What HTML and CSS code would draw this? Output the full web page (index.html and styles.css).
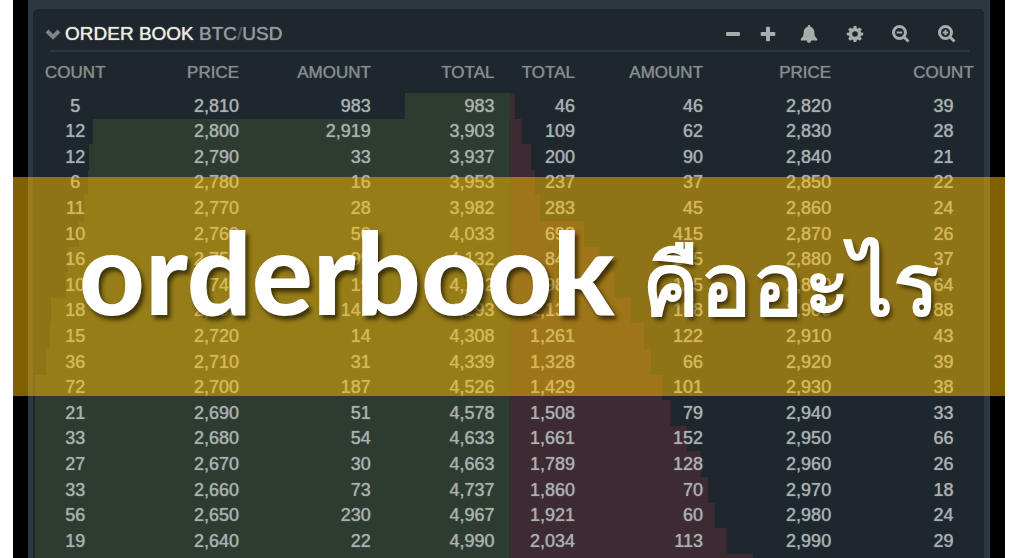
FILE: index.html
```html
<!DOCTYPE html>
<html lang="th">
<head>
<meta charset="utf-8">
<title>orderbook คืออะไร</title>
<link rel="stylesheet" href="styles.css">
</head>
<body>
<main class="cover">
  <section class="panel" aria-labelledby="book-title">
    <header class="panel-head">
      <svg class="chevron" viewBox="0 0 16 12" aria-hidden="true"><path d="M2 3l6 6 6-6"/></svg>
      <h2 class="panel-title" id="book-title">ORDER BOOK <span class="pair">BTC<span class="slash">/</span>USD</span></h2>
      <div class="tools">
        <button class="tool tool-minus" type="button" aria-label="Decrease precision"><svg viewBox="0 0 18 18"><rect x="2" y="7" width="14" height="4" rx="1"/></svg></button>
        <button class="tool tool-plus" type="button" aria-label="Increase precision"><svg viewBox="0 0 18 18"><path d="M7 2.500q0-.8.800-.8h2.400q.8 0 .8.800V7h4.500q.8 0 .8.800v2.400q0 .8-.8.800H11v4.500q0 .8-.8.800H7.800q-.8 0-.8-.8V11H2.500q-.8 0-.8-.8V7.800q0-.8.800-.8H7z"/></svg></button>
        <button class="tool tool-bell" type="button" aria-label="Alerts"><svg viewBox="0 0 18 18"><path d="M9 0c.8 0 1.300.5 1.300 1.300v.5c2.600.6 4 2.700 4 5.200 0 3.500.9 5.300 2.900 6.700v1.800H.8v-1.800C2.800 12.300 3.700 10.500 3.700 7c0-2.500 1.400-4.600 4-5.200v-.5C7.700.5 8.200 0 9 0zM6.800 15.500h4.400c0 1.500-1 2.300-2.200 2.300s-2.200-.8-2.200-2.300z"/></svg></button>
        <button class="tool tool-gear" type="button" aria-label="Settings"><svg viewBox="0 0 18 18"><path fill-rule="evenodd" d="M7.600 1h2.800l.4 2.200 1.200.5 1.900-1.300 1.900 2-1.300 1.800.5 1.200 2.200.4v2.500l-2.200.4-.5 1.200 1.300 1.800-1.900 2-1.900-1.300-1.200.5-.4 2.200H7.600l-.4-2.200-1.200-.5-1.900 1.300-1.900-2 1.300-1.800-.5-1.200-2.200-.4V7.800L3 7.400l.5-1.200-1.300-1.800 1.900-2L6 3.700l1.200-.5zM9 6.200a2.800 2.800 0 1 0 0 5.600 2.800 2.800 0 0 0 0-5.600z"/></svg></button>
        <button class="tool tool-out" type="button" aria-label="Zoom out"><svg class="lens" viewBox="0 0 18 18"><circle cx="7.500" cy="7.500" r="6"/><path d="M12 12l4.500 4.500"/><path class="thin" d="M4.700 7.500h5.600"/></svg></button>
        <button class="tool tool-in" type="button" aria-label="Zoom in"><svg class="lens" viewBox="0 0 18 18"><circle cx="7.500" cy="7.500" r="6"/><path d="M12 12l4.500 4.500"/><path class="thin" d="M4.700 7.500h5.600M7.500 4.700v5.600"/></svg></button>
      </div>
    </header>
    <div class="books">
      <table class="book bids">
        <thead><tr><th class="count">COUNT</th><th class="price">PRICE</th><th class="amount">AMOUNT</th><th class="total">TOTAL</th></tr></thead>
        <tbody id="bids"></tbody>
      </table>
      <table class="book asks">
        <thead><tr><th class="total">TOTAL</th><th class="amount">AMOUNT</th><th class="price">PRICE</th><th class="count">COUNT</th></tr></thead>
        <tbody id="asks"></tbody>
      </table>
    </div>
  </section>
  <div class="banner"><h1 class="headline">orderbook <span class="thai">คืออะไร</span></h1></div>
</main>
<script src="book.js"></script>
</body>
</html>
```
FILE: styles.css
```css
* { box-sizing: border-box; }

body {
  margin: 0;
  background: #fff;
  font-family: "Liberation Sans", Arial, sans-serif;
}

.cover {
  position: relative;
  height: 100vh;
  margin: 0 19px 0 13px;
  padding: 9px 15px 0;
  overflow: hidden;
  background: linear-gradient(90deg, #000 15px, #2c3841 15px calc(100% - 15px), #000 calc(100% - 15px));
}

.panel {
  min-height: 100%;
  margin: 0 6px 0 5px;
  border-radius: 5px 5px 0 0;
  background: #1e272e;
}

.panel-head {
  display: flex;
  align-items: center;
  height: 43px;
  margin: 0 15px 0 17px;
  padding-top: 8px;
  border-bottom: 2px solid #2c3841;
}

.chevron {
  width: 16px;
  height: 12px;
  margin-left: -5px;
  fill: none;
  stroke: #7e8587;
  stroke-width: 4;
}

.panel-title {
  margin: 0 auto 0 4px;
  color: #ecece0;
  font-size: 19px;
  font-weight: 400;
  line-height: 24px;
  text-shadow: 0 0 1px currentColor;
}

.pair {
  color: #949c9c;
  text-shadow: 0 0 1px currentColor;
}

.slash { color: #4b555a; }

.tools {
  display: flex;
  gap: 28px;
  margin-right: 13px;
}

.tool {
  width: 18px;
  height: 18px;
  padding: 0;
  border: 0;
  background: none;
}

.tool svg {
  display: block;
  width: 18px;
  height: 18px;
  fill: #a6adab;
}

.tool-minus { margin-right: -11px; }
.tool-plus { margin-right: -5px; }

.tool .lens {
  fill: none;
  stroke: #a6adab;
  stroke-width: 3;
}

.lens .thin { stroke-width: 2; }

.books {
  display: grid;
  grid-template-columns: 1fr 1fr;
  margin-left: 2px;
}

.book {
  width: 100%;
  border-collapse: collapse;
  table-layout: fixed;
  color: #a9b0b0;
  font-size: 18px;
  text-align: right;
}

.book th {
  height: 41px;
  padding: 0;
  color: #858c8b;
  font-size: 17px;
  font-weight: 400;
  text-shadow: 0 0 1px currentColor;
}

.book td {
  height: 26px;
  padding: 0 0 1px;
  line-height: 24px;
  text-shadow: 0 0 1px currentColor;
}

.book tbody tr:nth-child(5n + 2) td,
.book tbody tr:nth-child(5n + 4) td { height: 25px; }

.book tbody tr {
  background-repeat: no-repeat;
  background-size: var(--depth) 100%;
}

.bids tbody tr {
  background-image: linear-gradient(#2d3b30, #2d3b30);
  background-position: right;
}

.asks tbody tr {
  background-image: linear-gradient(#3d2a33, #3d2a33);
  background-position: left;
}

.book .count { text-align: center; }

.bids .count { width: 17%; }
.bids .price { width: 26%; }
.bids .amount { width: 28%; }
.bids .amount { padding-right: 1px; }
.bids .total { padding-right: 15px; }

.asks .total { width: 14%; }
.asks .amount { width: 27%; }
.asks .price { width: 27%; }
.asks .count { padding-left: 71px; }
.asks .total,
.asks .amount,
.asks .price { padding-right: 1px; }

.banner {
  position: absolute;
  top: 177px;
  right: 0;
  left: 0;
  display: flex;
  align-items: center;
  justify-content: center;
  height: 219px;
  padding-bottom: 20px;
  background: rgba(255, 192, 0, 0.5);
}

.headline {
  margin: 0;
  color: #fff;
  font-family: Lato, "Open Sans", sans-serif;
  font-size: 114px;
  font-weight: 900;
  line-height: 140px;
  white-space: nowrap;
  text-shadow: 3px 4px 4px rgba(0, 0, 0, 0.6);
}

.thai {
  font-size: 86px;
  font-weight: 400;
  -webkit-text-stroke: 2px #fff;
}
```
FILE: book.js
```js
// Rows are [count, price, amount, total], best price first.
const bids = [
  [5, 2810, 983, 983], [12, 2800, 2919, 3903], [12, 2790, 33, 3937],
  [6, 2780, 16, 3953], [11, 2770, 28, 3982], [10, 2760, 50, 4033],
  [16, 2750, 99, 4132], [10, 2740, 19, 4152], [18, 2730, 141, 4293],
  [15, 2720, 14, 4308], [36, 2710, 31, 4339], [72, 2700, 187, 4526],
  [21, 2690, 51, 4578], [33, 2680, 54, 4633], [27, 2670, 30, 4663],
  [33, 2660, 73, 4737], [56, 2650, 230, 4967], [19, 2640, 22, 4990]
];
const asks = [
  [39, 2820, 46, 46], [28, 2830, 62, 109], [21, 2840, 90, 200],
  [22, 2850, 37, 237], [24, 2860, 45, 283], [26, 2870, 415, 698],
  [37, 2880, 145, 844], [64, 2890, 135, 980], [88, 2900, 158, 1138],
  [43, 2910, 122, 1261], [39, 2920, 66, 1328], [38, 2930, 101, 1429],
  [33, 2940, 79, 1508], [66, 2950, 152, 1661], [26, 2960, 128, 1789],
  [18, 2970, 70, 1860], [24, 2980, 60, 1921], [29, 2990, 113, 2034]
];
const fullDepth = 4450;
const order = {
  bids: ["count", "price", "amount", "total"],
  asks: ["total", "amount", "price", "count"]
};

function addRow(body, total) {
  const row = body.insertRow();
  row.style.setProperty("--depth", Math.min(100, total / fullDepth * 100) + "%");
  return row;
}

function fill(id, rows, nextTotal) {
  const body = document.getElementById(id);
  for (const [count, price, amount, total] of rows) {
    const values = { count, price, amount, total };
    const row = addRow(body, total);
    for (const name of order[id]) {
      const cell = row.insertCell();
      cell.className = name;
      cell.textContent = values[name].toLocaleString("en-US");
    }
  }
  // The next level's bar starts just above the fold.
  addRow(body, nextTotal).insertCell().colSpan = 4;
}

fill("bids", bids, 5010);
fill("asks", asks, 2280);
```
